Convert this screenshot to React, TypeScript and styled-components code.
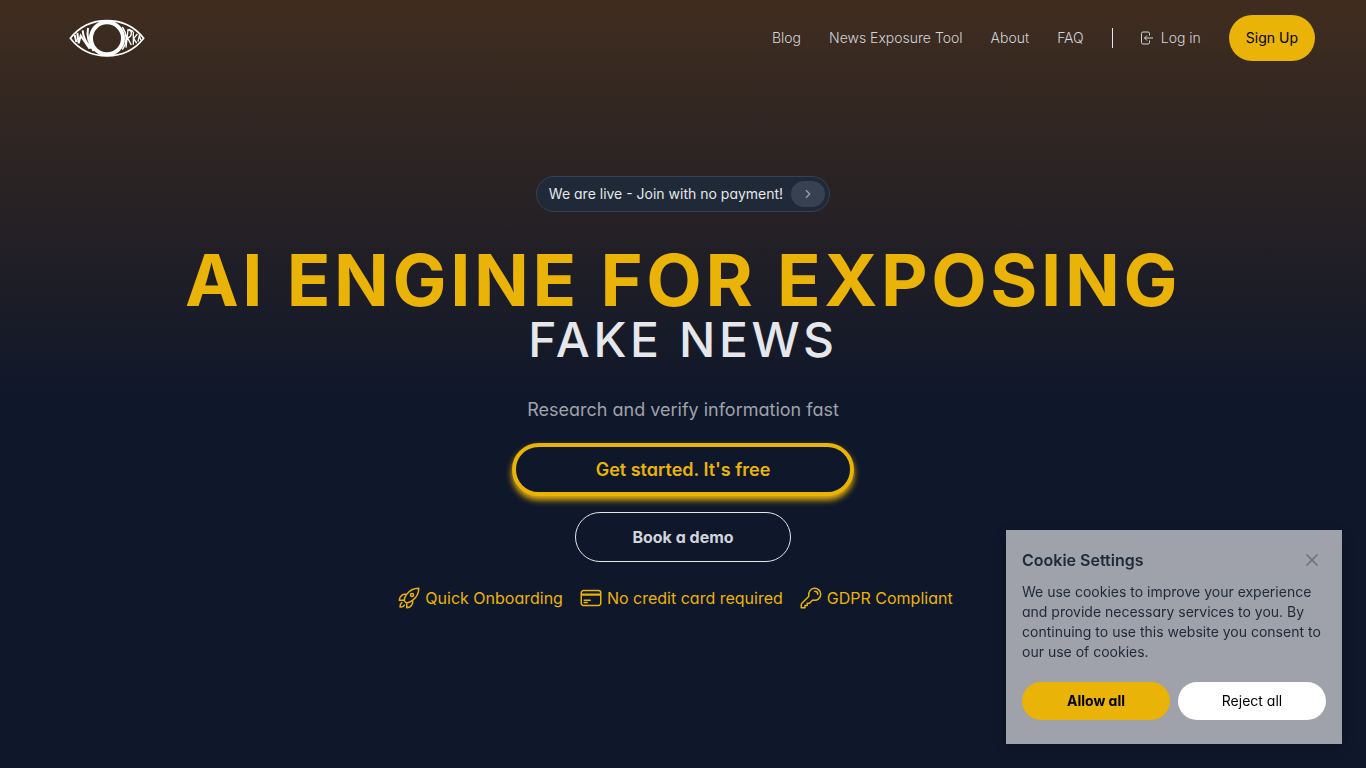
import React from "react";
import styled, { createGlobalStyle, css } from "styled-components";
import { HiOutlineCreditCard, HiOutlineKey, HiOutlineRocketLaunch } from "react-icons/hi2";
import { ChevronRight, X } from "lucide-react";

const GlobalStyle = createGlobalStyle`
  *, *::before, *::after { box-sizing: border-box; }
  body {
    margin: 0;
    background: #0f172a;
    color: #e5e7eb;
    font-family: Inter, "Liberation Sans", sans-serif;
    font-feature-settings: "cv11";
    font-size: 16px;
    line-height: 24px;
  }
  h1, h2, p, ul { margin: 0; padding: 0; }
  button { font: inherit; font-feature-settings: inherit; cursor: pointer; }
  a { color: inherit; text-decoration: none; }
`;

const Page = styled.div`
  min-height: 100vh;
  background: linear-gradient(180deg, #402d1f 0, #0f172a 400px);
`;

const Header = styled.header`
  display: flex;
  align-items: center;
  justify-content: space-between;
  height: 76px;
  padding: 0 51px 0 69px;
`;

const Nav = styled.nav`
  display: flex;
  align-items: center;
  gap: 28px;
  font-size: 14px;
  line-height: 20px;
  font-weight: 300;
`;

const NavLink = styled.a`
  display: inline-flex;
  align-items: center;
  gap: 8px;
  color: #d1d5db;
`;

const Divider = styled.span`
  width: 1px;
  height: 20px;
  background: #e5e7eb;
`;

const SignUp = styled.a`
  padding: 13px 17px;
  border-radius: 23px;
  background: #eab308;
  color: #000;
  font-weight: 400;
`;

const Hero = styled.main`
  display: flex;
  flex-direction: column;
  align-items: center;
  padding: 100px 24px 48px;
  text-align: center;
`;

const Announcement = styled.a`
  display: flex;
  align-items: center;
  gap: 8px;
  height: 36px;
  padding: 0 4px 0 12px;
  border: 1px solid #374151;
  border-radius: 18px;
  background: #1f2937;
  font-size: 14px;
  line-height: 20px;
`;

const AnnouncementArrow = styled.span`
  display: flex;
  align-items: center;
  justify-content: center;
  width: 34px;
  height: 26px;
  border-radius: 13px;
  background: #374151;
  color: #9ca3af;
`;

const Title = styled.h1`
  margin-top: 32px;
  color: #eab308;
  font-size: 72px;
  line-height: 72px;
  font-weight: 700;
  font-optical-sizing: none;
  letter-spacing: 0.05em;
`;

const TitleAccent = styled.span`
  display: block;
  color: #e5e7eb;
  font-size: 48px;
  line-height: 48px;
  font-weight: 500;
`;

const Tagline = styled.p`
  margin-top: 32px;
  color: #a1a1aa;
  font-size: 18px;
  line-height: 28px;
`;

const HeroButton = styled.button<{ $primary?: boolean }>`
  background: transparent;
  ${({ $primary }) =>
    $primary
      ? css`
          width: 342px;
          height: 53px;
          margin-top: 19px;
          border: 4px solid #eab308;
          border-radius: 27px;
          box-shadow: 0 4px 6px #eab308;
          background: #0f172a;
          color: #eab308;
          font-size: 18px;
          line-height: 28px;
          font-weight: 600;
        `
      : css`
          width: 216px;
          height: 50px;
          margin-top: 16px;
          border: 1px solid #e5e7eb;
          border-radius: 25px;
          color: #d1d5db;
          font-weight: 700;
        `}
`;

const Features = styled.ul`
  display: flex;
  flex-wrap: wrap;
  justify-content: center;
  gap: 16px;
  margin-top: 24px;
  margin-right: 16px;
  list-style: none;
  color: #eab308;
`;

const Feature = styled.li`
  display: flex;
  align-items: center;
  gap: 4px;
`;

const CookieCard = styled.section`
  position: fixed;
  right: 24px;
  bottom: 24px;
  width: 336px;
  padding: 16px 16px 24px;
  background: #9fa1ab;
  color: #1f2937;
  box-shadow: 0 4px 12px rgba(0, 0, 0, 0.2);
`;

const CookieHeader = styled.div`
  display: flex;
  align-items: center;
  justify-content: space-between;
  height: 28px;
  padding-right: 4px;
`;

const CookieTitle = styled.h2`
  font-size: 16px;
  line-height: 24px;
  font-weight: 600;
`;

const CloseButton = styled.button`
  display: flex;
  padding: 0;
  border: 0;
  background: none;
  color: #6b7280;
`;

const CookieText = styled.p`
  margin-top: 8px;
  font-size: 14px;
  line-height: 20px;
`;

const CookieActions = styled.div`
  display: grid;
  grid-template-columns: 1fr 1fr;
  gap: 8px;
  margin-top: 20px;
`;

const CookieButton = styled.button<{ $accept?: boolean }>`
  height: 38px;
  border: 0;
  border-radius: 19px;
  background: ${({ $accept }) => ($accept ? "#eab308" : "#fff")};
  color: #000;
  font-size: 14px;
  line-height: 20px;
  font-weight: ${({ $accept }) => ($accept ? 700 : 400)};
`;

function EyeLogo() {
  return (
    <svg width="76" height="38" viewBox="0 0 228 114" fill="none" stroke="#fff" aria-hidden="true">
      <path d="M4 58C32 22 72 5 114 5s82 17 110 53c-28 36-68 53-110 53S32 94 4 58Z" strokeWidth="5" />
      <circle cx="114" cy="58" r="48" strokeWidth="12" />
      <path d="M17 48 22 69M25 42 29 73 35 50 62 89" strokeWidth="6" />
      <path d="M41 34C42 52 50 70 66 88M57 27C53 48 58 72 74 96" strokeWidth="6" />
      <path d="M160 24c15 22 15 46 0 68M171 86l6-54c14 4 13 20-1 25l11 21M193 77V39M205 45l-11 14 9 13M207 68l4-18 5 14M180 31l13 7" strokeWidth="4" />
    </svg>
  );
}

function LoginIcon() {
  return (
    <svg width="12" height="14" viewBox="0 0 12 14" fill="none" stroke="currentColor" strokeLinejoin="round" aria-hidden="true">
      <path d="M8.5 4.5v-2a1.5 1.5 0 0 0-1.5-1.5H2A1.5 1.5 0 0 0 .5 2.5v9A1.5 1.5 0 0 0 2 13h5a1.5 1.5 0 0 0 1.5-1.5v-2M12 7H3.5M6 4.5 3.5 7 6 9.5" />
    </svg>
  );
}

const links = ["Blog", "News Exposure Tool", "About", "FAQ"];

const features = [
  { icon: HiOutlineRocketLaunch, label: "Quick Onboarding" },
  { icon: HiOutlineCreditCard, label: "No credit card required" },
  { icon: HiOutlineKey, label: "GDPR Compliant" },
];

export default function App() {
  return (
    <Page>
      <GlobalStyle />
      <Header>
        <NavLink href="#" aria-label="Home">
          <EyeLogo />
        </NavLink>
        <Nav>
          {links.map((label) => (
            <NavLink key={label} href="#">
              {label}
            </NavLink>
          ))}
          <Divider />
          <NavLink href="#">
            <LoginIcon />
            Log in
          </NavLink>
          <SignUp href="#">Sign Up</SignUp>
        </Nav>
      </Header>
      <Hero>
        <Announcement href="#">
          We are live - Join with no payment!
          <AnnouncementArrow>
            <ChevronRight size={14} />
          </AnnouncementArrow>
        </Announcement>
        <Title>
          AI ENGINE FOR EXPOSING
          <TitleAccent>FAKE NEWS</TitleAccent>
        </Title>
        <Tagline>Research and verify information fast</Tagline>
        <HeroButton $primary>Get started. It's free</HeroButton>
        <HeroButton>Book a demo</HeroButton>
        <Features>
          {features.map(({ icon: Icon, label }) => (
            <Feature key={label}>
              <Icon size={24} />
              {label}
            </Feature>
          ))}
        </Features>
      </Hero>
      <CookieCard aria-labelledby="cookie-title">
        <CookieHeader>
          <CookieTitle id="cookie-title">Cookie Settings</CookieTitle>
          <CloseButton aria-label="Close">
            <X size={20} strokeWidth={2} />
          </CloseButton>
        </CookieHeader>
        <CookieText>
          We use cookies to improve your experience and provide necessary services to you. By continuing to use this
          website you consent to our use of cookies.
        </CookieText>
        <CookieActions>
          <CookieButton $accept>Allow all</CookieButton>
          <CookieButton>Reject all</CookieButton>
        </CookieActions>
      </CookieCard>
    </Page>
  );
}
